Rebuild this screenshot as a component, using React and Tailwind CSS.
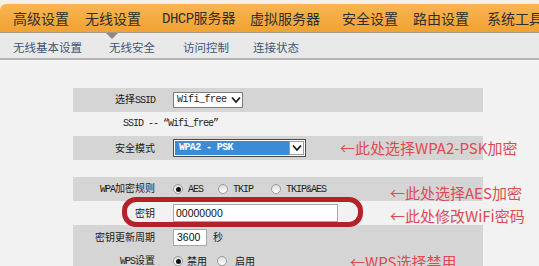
import React from "react";

const MONO = "font-['Liberation_Mono','Noto_Sans_CJK_SC',monospace]";
const SANS = "font-['Liberation_Sans',sans-serif]";

function Chevron() {
  return (
    <svg width="10" height="8" viewBox="0 0 10 8">
      <polyline points="1,1.5 5,6 9,1.5" fill="none" stroke="#1a1a1a" strokeWidth="1.8" />
    </svg>
  );
}

function Radio({ checked }) {
  return (
    <span className="w-[10px] h-[10px] rounded-full border border-[#9a9a9a] bg-gradient-to-b from-[#dcdcdc] to-white flex items-center justify-center">
      {checked ? <span className="w-[5px] h-[5px] rounded-full bg-[#111]" /> : null}
    </span>
  );
}

function Asc({ children }) {
  return <span className={`${MONO} tracking-[-1px]`}>{children}</span>;
}

function Row({ gray, label, children }) {
  return (
    <div className={gray ? "h-[24px] flex items-center bg-[#d5d5d5]" : "h-[24px] flex items-center"}>
      <div className="w-[82px] text-right text-[10px] leading-[12px] text-[#1a1a1a]">{label}</div>
      <div className="ml-[18px] flex items-center">{children}</div>
    </div>
  );
}

export default function App() {
  return (
    <div className="w-[539px] h-[266px] overflow-hidden bg-[#f2f2f2] relative font-['Noto_Sans_CJK_SC',sans-serif]">
      <div className="h-[4px] bg-[#f5f1ea]" />
      <div className="h-[28px] rounded-tl-[6px] bg-gradient-to-b from-[#f9b451] to-[#f1a232] flex items-center pl-[13px] text-[14px] leading-[16px] text-[#2e2e2e] whitespace-nowrap">
        <span className="w-[72px] shrink-0">高级设置</span>
        <span className="w-[77px] shrink-0">无线设置</span>
        <span className="w-[88px] shrink-0"><span className={`${MONO} tracking-[-0.5px]`}>DHCP</span>服务器</span>
        <span className="w-[92px] shrink-0">虚拟服务器</span>
        <span className="w-[71px] shrink-0">安全设置</span>
        <span className="w-[74px] shrink-0">路由设置</span>
        <span className="shrink-0">系统工具</span>
      </div>
      <div className="h-[1px] bg-[#a59a8c]" />
      <div className="h-[25px] bg-[#e9e9e9] flex items-center pl-[13px] pt-[3px] text-[11.5px] leading-[14px] text-[#41557a] whitespace-nowrap relative">
        <span className="absolute left-[106px] top-0 w-0 h-0 border-l-[6px] border-r-[6px] border-t-[6px] border-l-transparent border-r-transparent border-t-[#8f877c]" />
        <span className="w-[96px] shrink-0">无线基本设置</span>
        <span className="w-[74px] shrink-0">无线安全</span>
        <span className="w-[70px] shrink-0">访问控制</span>
        <span className="shrink-0">连接状态</span>
      </div>
      <div className="h-[2px] bg-[#b4b4b4]" />

      <div className="pt-[28px] ml-[73px] w-[410px]">
        <Row gray label={<>选择<Asc>SSID</Asc></>}>
          <div className="w-[70px] h-[16px] border border-[#7c7c7c] bg-white flex items-center justify-between pl-[3px] pr-[1px]">
            <span className={`${MONO} text-[10px] leading-[12px] tracking-[-0.5px] text-[#222]`}>Wifi_free</span>
            <Chevron />
          </div>
        </Row>
        <div className="h-[24px] flex items-center pl-[50px]">
          <span className={`${MONO} text-[10px] leading-[12px] tracking-[-1px] text-[#222]`}>SSID -- “Wifi_free”</span>
        </div>
        <Row gray label="安全模式">
          <div className="w-[133px] h-[18px] border border-[#4a4a4a] bg-white flex items-center p-[1px]">
            <div className="flex-1 h-[14px] bg-[#3b8bd6] flex items-center pl-[4px]">
              <span className={`${MONO} text-[10px] leading-[12px] tracking-[-0.6px] font-bold text-white whitespace-pre`}>WPA2 - PSK</span>
            </div>
            <div className="w-[15px] h-[14px] border border-[#9a9a9a] flex items-center justify-center bg-white">
              <Chevron />
            </div>
          </div>
        </Row>
        <div className="h-[17px]" />
        <Row gray label={<><Asc>WPA</Asc>加密规则</>}>
          <div className="flex items-center text-[10px] leading-[12px] text-[#222]">
            <Radio checked />
            <span className="ml-[5px] w-[30px]"><Asc>AES</Asc></span>
            <Radio />
            <span className="ml-[5px] w-[38px]"><Asc>TKIP</Asc></span>
            <Radio />
            <span className="ml-[5px]"><Asc>TKIP&amp;AES</Asc></span>
          </div>
        </Row>
        <Row label="密钥">
          <div className="w-[165px] h-[18px] border border-[#a8a8a8] bg-white flex items-center pl-[2px]">
            <span className={`${SANS} text-[10.5px] leading-[12px] text-[#111]`}>00000000</span>
          </div>
        </Row>
        <Row gray label="密钥更新周期">
          <div className="w-[34px] h-[17px] border border-[#a8a8a8] bg-white flex items-center pl-[3px]">
            <span className={`${SANS} text-[10.5px] leading-[12px] text-[#111]`}>3600</span>
          </div>
          <span className="ml-[6px] text-[10px] leading-[12px] text-[#222]">秒</span>
        </Row>
        <Row gray label={<><Asc>WPS</Asc>设置</>}>
          <div className="flex items-center text-[10px] leading-[12px] text-[#222]">
            <Radio checked />
            <span className="ml-[4px] w-[30px]">禁用</span>
            <Radio />
            <span className="ml-[8px]">启用</span>
          </div>
        </Row>
      </div>

      <div className="absolute left-[122px] top-[197px] w-[241px] h-[30px] border-[5px] border-[#b52129] rounded-[14px] pointer-events-none" />

      <div className="absolute left-[340px] top-[139px] text-[15px] leading-[18px] text-[#df4a50] whitespace-nowrap">←此处选择WPA2-PSK加密</div>
      <div className="absolute left-[390px] top-[184px] text-[15px] leading-[18px] text-[#df4a50] whitespace-nowrap">←此处选择AES加密</div>
      <div className="absolute left-[390px] top-[207px] text-[15px] leading-[18px] text-[#df4a50] whitespace-nowrap">←此处修改WiFi密码</div>
      <div className="absolute left-[350px] top-[253px] text-[15px] leading-[18px] text-[#df4a50] whitespace-nowrap">←WPS选择禁用</div>
    </div>
  );
}
